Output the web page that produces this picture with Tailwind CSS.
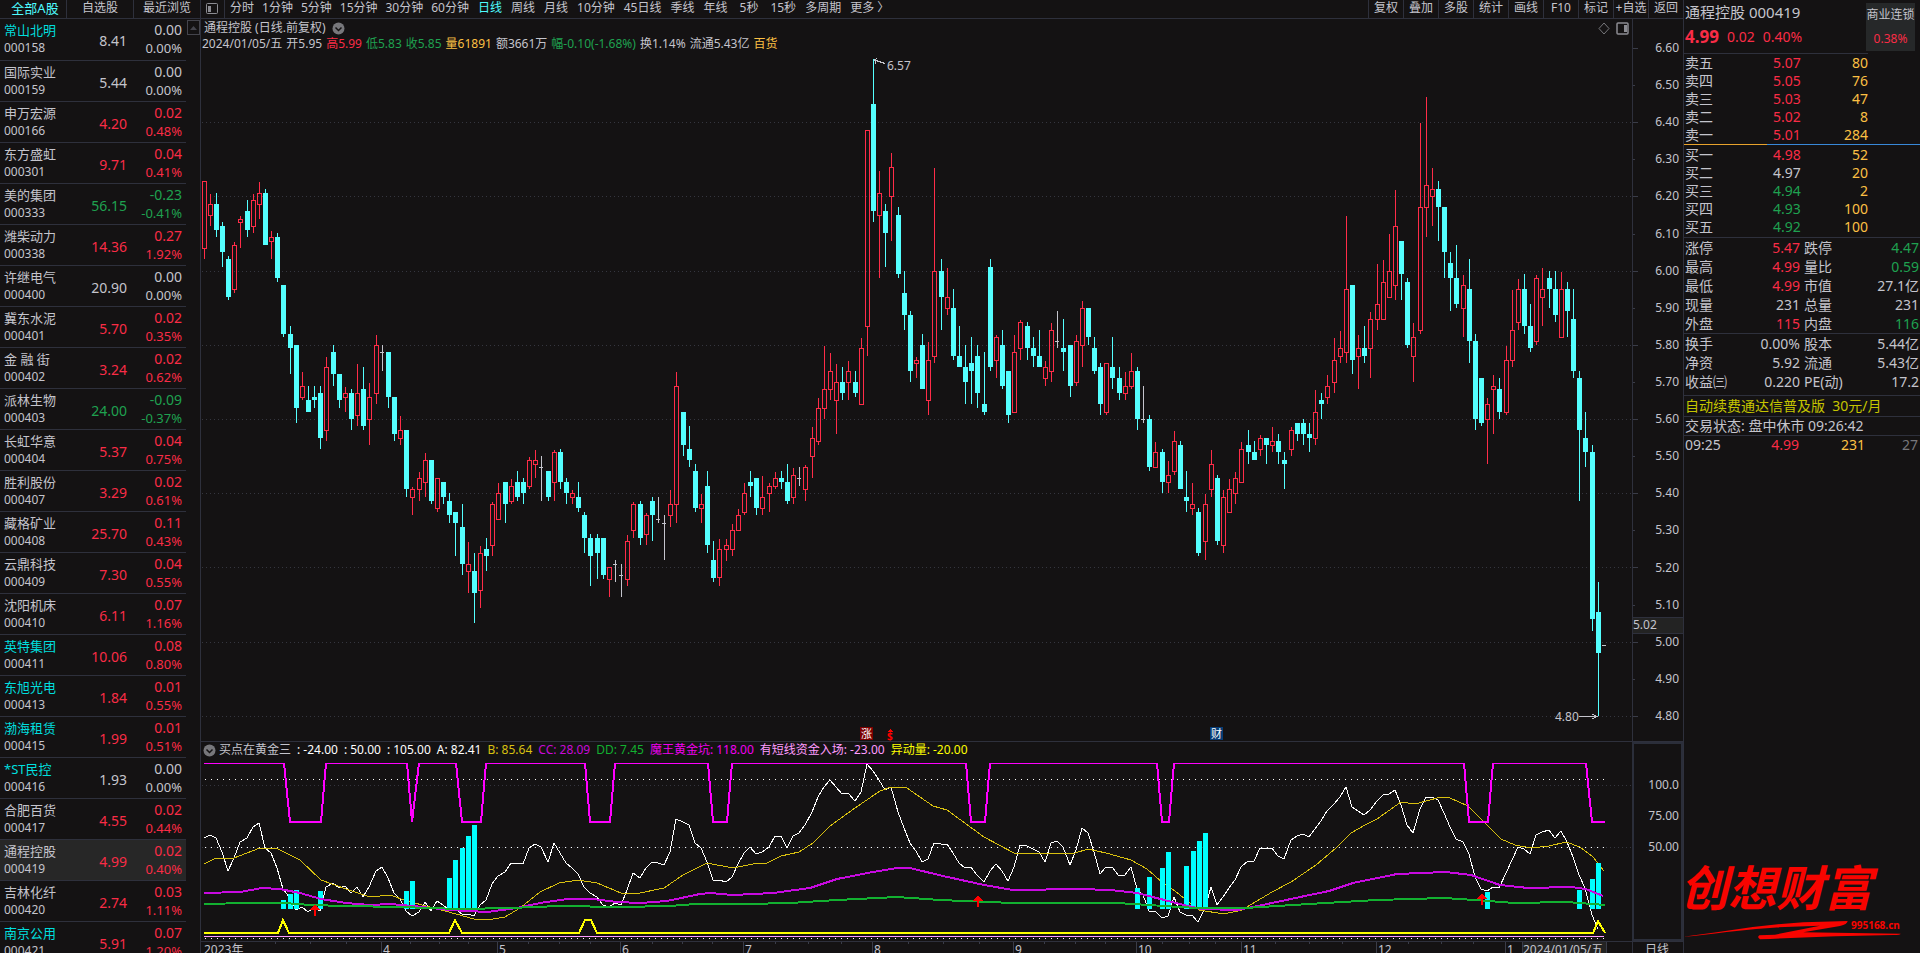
<!DOCTYPE html>
<html lang="zh-CN">
<head>
    <meta charset="UTF-8">
    <meta name="viewport" content="width=device-width, initial-scale=1.0">
    <title>通程控股 000419</title>
    <script src="https://cdn.jsdelivr.net/npm/@tailwindcss/browser@4"></script>
</head>
<body class="bg-[#141213] text-[#c4c4cc] font-['Noto_Sans','Noto_Sans_CJK_SC',sans-serif] text-[12px] leading-[16px]">
<div class="flex h-screen overflow-hidden">

    <!-- Stock list -->
    <aside class="w-[201px] shrink-0 border-r border-[#2e303c] overflow-hidden">
        <nav class="flex h-[19px] border-b border-[#2e303c]">
            <button class="w-[67px] h-[18px] pl-1 pb-[2px] border-r border-[#2e303c] text-[13px] text-[#4ffbff]">全部A股</button>
            <button class="w-[67px] h-[18px] pb-[2px] border-r border-[#2e303c]">自选股</button>
            <button class="flex-1 h-[18px] pb-[2px]">最近浏览</button>
        </nav>
        <div class="flex">
            <table class="w-[186px] table-fixed border-collapse">
                <tbody id="stocks"></tbody>
            </table>
            <button aria-label="向上滚动" class="ml-px mt-px w-[13px] h-[15px] border border-[#44444c] flex items-center justify-center">
                <svg width="7" height="4"><path d="M0 4L3.500 0L7 4Z" fill="#44444c"/></svg>
            </button>
        </div>
    </aside>

    <!-- Charts -->
    <main class="flex-1 min-w-0 flex flex-col">
        <div class="flex h-[19px] shrink-0 border-b border-[#2e303c] whitespace-nowrap">
            <button aria-label="侧栏" class="w-6 h-[18px] border-r border-[#2e303c] pl-1">
                <svg width="13" height="12" fill="none" stroke="#8c8c92"><rect x="1.500" y=".5" width="11" height="10" rx="1"/><rect x="3" y="3" width="3" height="6" fill="#8c8c92" stroke="none"/></svg>
            </button>
            <div class="flex gap-2 pl-[5px] pb-[2px]">
                <button>分时</button><button>1分钟</button><button>5分钟</button><button>15分钟</button><button>30分钟</button><button>60分钟</button>
            </div>
            <div class="flex gap-[9px] pl-[9px] pb-[2px]">
                <button class="text-[#4ffbff]">日线</button><button>周线</button><button>月线</button><button>10分钟</button><button>45日线</button><button>季线</button><button>年线</button><button class="px-[3px]">5秒</button><button>15秒</button><button>多周期</button><button>更多 〉</button>
            </div>
            <div class="ml-auto flex" id="tools"></div>
        </div>

        <div class="flex h-[723px] shrink-0 border-b border-[#2e303c]">
            <section class="relative flex-1 overflow-hidden">
                <svg class="absolute inset-0 w-full h-full" shape-rendering="crispEdges">
                    <g transform="translate(-201 -19)" id="kline"></g>
                </svg>
                <div class="relative flex items-center pl-[3px] pt-px gap-[6px]">
                    <h1>通程控股 (日线.前复权)</h1>
                    <svg width="13" height="13"><circle cx="6.500" cy="6.500" r="6" fill="#77777b"/><path d="M3.500 5.500L6.500 8.500L9.500 5.500" fill="none" stroke="#141213" stroke-width="1.500"/></svg>
                    <div class="ml-auto flex gap-[6px] pr-[3px]">
                        <svg width="12" height="13" fill="none" stroke="#77777b"><path d="M6 1L11 6.500L6 12L1 6.500Z"/></svg>
                        <svg width="13" height="13" fill="none" stroke="#8c8c92"><rect x="1" y="1" width="11" height="11" rx="1" stroke-width="1.500"/><rect x="8" y="3" width="3" height="7" fill="#8c8c92" stroke="none"/></svg>
                    </div>
                </div>
                <p class="relative flex pl-px gap-1 whitespace-nowrap">
                    <span>2024/01/05/五</span><span>开5.95</span><span class="text-[#f92c46]">高5.99</span><span class="text-[#1fa150]">低5.83</span><span class="text-[#1fa150]">收5.85</span><span class="text-[#fcc044]">量61891</span><span>额3661万</span><span class="text-[#1fa150]">幅-0.10(-1.68%)</span><span>换1.14%</span><span>流通5.43亿</span><span class="text-[#fcc044]">百货</span>
                </p>
            </section>
            <div class="relative w-[51px] border-l border-[#2e303c]">
                <svg class="absolute inset-0 w-full h-full" shape-rendering="crispEdges"><g transform="translate(0 -19)" id="ticks"></g></svg>
                <div id="prices" class="relative h-[705px] pt-[21px] pr-1 flex flex-col justify-between text-right"></div>
                <div class="absolute top-[598px] inset-x-0 h-[17px] border-y border-[#2e303c] bg-[#232323] leading-[14px]">5.02</div>
            </div>
        </div>

        <div class="flex h-[199px] shrink-0">
            <section class="relative flex-1 overflow-hidden">
                <svg class="absolute inset-0 w-full h-full" shape-rendering="crispEdges">
                    <g transform="translate(-201 -742)" id="indicator" fill="none"></g>
                </svg>
                <p class="relative flex items-center pl-[2px] gap-[6px] whitespace-nowrap text-white">
                    <span class="flex items-center gap-[3px] text-[#c4c4cc]"><svg width="13" height="13"><circle cx="6.500" cy="6.500" r="6" fill="#77777b"/><path d="M3.500 5.500L6.500 8.500L9.500 5.500" fill="none" stroke="#141213" stroke-width="1.500"/></svg>买点在黄金三</span>
                    <span>: -24.00</span><span>: 50.00</span><span>: 105.00</span><span>A: 82.41</span><span class="text-[#d8c010]">B: 85.64</span><span class="text-[#c80ad8]">CC: 28.09</span><span class="text-[#12b030]">DD: 7.45</span><span class="text-[#f000f0]">魔王黄金坑: 118.00</span><span class="text-[#ff9cff]">有短线资金入场: -23.00</span><span class="text-[#ffff00]">异动量: -20.00</span>
                </p>
            </section>
            <div class="w-[51px] border-2 border-[#2b2e3a] pt-[33px] pr-[2px] flex flex-col gap-[15px] text-right">
                <span>100.0</span><span>75.00</span><span>50.00</span>
            </div>
        </div>

        <div class="flex h-[18px] shrink-0 border-t border-[#2e303c]">
            <div class="relative flex-1 overflow-hidden">
                <svg class="absolute inset-0 w-full h-full" fill="#c4c4cc" font-size="12"><g transform="translate(-201 -942)" id="months"></g></svg>
            </div>
            <div class="w-[51px] border-l border-[#2e303c] pl-3">日线</div>
        </div>
    </main>

    <!-- Quote panel -->
    <aside class="w-[237px] shrink-0 border-l border-[#2e303c] flex flex-col text-[14px]">
        <div class="flex h-[53px] shrink-0 pl-px pr-[5px] justify-between">
            <div>
                <h2 class="text-[15px] leading-[24px]">通程控股 000419</h2>
                <p class="flex items-center gap-2 leading-[26px] text-[#f92c46]"><b class="text-[17px]">4.99</b><span>0.02</span><span>0.40%</span></p>
            </div>
            <a href="#" class="mt-[3px] w-[49px] h-[48px] bg-[#262829] text-[12px] leading-[24px] text-center whitespace-nowrap">商业连锁<br><span class="text-[#f92c46]">0.38%</span></a>
        </div>
        <table class="w-[184px] table-fixed leading-[18px] border-t border-[#2e303c]"><tbody id="asks"></tbody></table>
        <div class="flex h-px mb-px shrink-0"><div class="w-[83px] bg-[#e8a22c]"></div><div class="flex-1 bg-[#3888d8]"></div></div>
        <table class="w-[184px] table-fixed leading-[18px]"><tbody id="bids"></tbody></table>
        <table class="w-full table-fixed leading-[19px] border-t border-[#2e303c] mt-px"><tbody id="stats"></tbody></table>
        <table class="w-full table-fixed leading-[19px] border-t border-[#2e303c]"><tbody id="basics"></tbody></table>
        <p class="h-[21px] mt-1 shrink-0 pl-px border-t border-[#2e303c] leading-[19px] text-[#c4c400] whitespace-pre">自动续费通达信普及版  30元/月</p>
        <p class="h-[19px] shrink-0 pl-px border-t border-[#2e303c] leading-[17px]">交易状态: 盘中休市 09:26:42</p>
        <div class="flex shrink-0 border-t border-[#2e303c] pl-px pr-[2px] leading-[18px]">
            <span class="w-[50px]">09:25</span><span class="w-[64px] text-right text-[#f92c46]">4.99</span><span class="w-[66px] text-right text-[#fcc044]">231</span><span class="flex-1 text-right text-[#77777b]">27</span>
        </div>
        <svg class="mt-auto shrink-0 w-full h-[113px] overflow-visible" fill="#f80400">
            <text x="-4" y="66" font-size="48" font-weight="700" font-style="italic" font-family="Noto Sans CJK SC">创想财富</text>
            <path transform="translate(-24 0) scale(.3333)" d="M70 290L170 277Q300 255 430 247L563 243Q562 253 540 258L430 277L722 281Q722 285 700 285Q500 288 300 298Q290 292 298 286L345 284L480 257Q330 260 200 276Q130 286 70 290Z"/>
            <text x="167" y="89" font-size="10" font-weight="700">995168.cn</text>
        </svg>
    </aside>
</div>

<script>
    const $ = id => document.getElementById(id);
    const tone = { r: 'text-[#f92c46]', g: 'text-[#1fa150]', w: '', y: 'text-[#fcc044]', c: 'text-[#00dede]' };

    // name, code, price, change, percent; names starting with "~" are cyan
    const stocks = `~常山北明,000158,8.41,0.00,0.00%
国际实业,000159,5.44,0.00,0.00%
申万宏源,000166,4.20,0.02,0.48%
东方盛虹,000301,9.71,0.04,0.41%
美的集团,000333,56.15,-0.23,-0.41%
潍柴动力,000338,14.36,0.27,1.92%
许继电气,000400,20.90,0.00,0.00%
冀东水泥,000401,5.70,0.02,0.35%
金 融 街,000402,3.24,0.02,0.62%
派林生物,000403,24.00,-0.09,-0.37%
长虹华意,000404,5.37,0.04,0.75%
胜利股份,000407,3.29,0.02,0.61%
藏格矿业,000408,25.70,0.11,0.43%
云鼎科技,000409,7.30,0.04,0.55%
沈阳机床,000410,6.11,0.07,1.16%
~英特集团,000411,10.06,0.08,0.80%
~东旭光电,000413,1.84,0.01,0.55%
~渤海租赁,000415,1.99,0.01,0.51%
~*ST民控,000416,1.93,0.00,0.00%
合肥百货,000417,4.55,0.02,0.44%
通程控股,000419,4.99,0.02,0.40%
吉林化纤,000420,2.74,0.03,1.11%
~南京公用,000421,5.91,0.07,1.20%`;
    $('stocks').innerHTML = stocks.split('\n').map(line => {
        const [name, code, price, chg, pct] = line.split(',');
        const cls = chg === '0.00' ? tone.w : chg[0] === '-' ? tone.g : tone.r;
        return `<tr class="h-[41px] border-b border-[#2e303c] leading-[18px] ${code === '000419' ? 'bg-[#272727]' : ''}">
            <td class="w-[72px] pl-1 whitespace-nowrap"><div class="text-[13px] ${name[0] === '~' ? tone.c : ''}">${name.replace('~', '')}</div><div>${code}</div></td>
            <td class="w-[55px] pt-1 text-right text-[14px] ${cls}">${price}</td>
            <td class="pr-1 text-right ${cls}"><div class="text-[14px]">${chg}</div><div class="text-[13px]">${pct}</div></td></tr>`;
    }).join('');

    $('tools').innerHTML = ['复权', '叠加', '多股', '统计', '画线', 'F10', '标记', '+自选', '返回'].map(t =>
        `<button class="w-[35px] h-[18px] pb-[2px] border-l border-[#2e303c]">${t}</button>`).join('');

    const book = rows => rows.map(([n, p, q, c]) =>
        `<tr><td class="pl-px">${n}</td><td class="text-right pr-[6px] ${tone[c]}">${p}</td><td class="text-right text-[#fcc044]">${q}</td></tr>`).join('');
    $('asks').innerHTML = book([['卖五', '5.07', 80, 'r'], ['卖四', '5.05', 76, 'r'], ['卖三', '5.03', 47, 'r'], ['卖二', '5.02', 8, 'r'], ['卖一', '5.01', 284, 'r']]);
    $('bids').innerHTML = book([['买一', '4.98', 52, 'r'], ['买二', '4.97', 20, 'w'], ['买三', '4.94', 2, 'g'], ['买四', '4.93', 100, 'g'], ['买五', '4.92', 100, 'g']]);

    const pairs = rows => rows.map(([a, b, c, d, e, f]) =>
        `<tr><td class="w-[52px] pl-px whitespace-nowrap">${a}</td><td class="w-[64px] text-right ${tone[c]}">${b}</td><td class="w-[60px] pl-1">${d}</td><td class="text-right pr-px ${tone[f]}">${e}</td></tr>`).join('');
    $('stats').innerHTML = pairs([['涨停', '5.47', 'r', '跌停', '4.47', 'g'], ['最高', '4.99', 'r', '量比', '0.59', 'g'], ['最低', '4.99', 'r', '市值', '27.1亿', 'w'], ['现量', '231', 'w', '总量', '231', 'w'], ['外盘', '115', 'r', '内盘', '116', 'g']]);
    $('basics').innerHTML = pairs([['换手', '0.00%', 'w', '股本', '5.44亿', 'w'], ['净资', '5.92', 'w', '流通', '5.43亿', 'w'], ['收益㈢', '0.220', 'w', 'PE(动)', '17.2', 'w']]);

    // Price scale
    let labels = '', ticks = '';
    for (let i = 0; i < 19; i++) {
        labels += `<span>${(6.6 - i / 10).toFixed(2)}</span>`;
        ticks += `<rect x="0" y="${Math.round(48 + i * 37.1)}" width="${i % 2 ? 2 : 5}" height="1" fill="#3a3c48"/>`;
    }
    $('prices').innerHTML = labels;
    $('ticks').innerHTML = ticks;

    // Candles: kind (r rise, c fall, w flat), high, body top, body bottom, low
    const candles = `r181,181,249,259 r194,204,216,226 c193,204,230,237 c222,226,252,267 c256,259,297,300 r242,245,290,293 r216,219,223,248 c200,211,230,237 r194,200,227,233 r182,193,205,219
c189,193,245,245 r231,237,242,259 c233,237,278,282 c285,285,334,337 c326,334,348,374 c345,345,408,423 r372,386,398,400 c386,400,412,412 c386,397,400,408 c386,393,438,449
r357,367,431,441 c345,352,374,386 c374,374,400,408 r387,393,398,412 c389,393,419,430 r364,393,416,426 c367,389,426,430 r383,397,420,445 r335,345,394,404 w345,352,353,371
c352,352,397,408 c397,397,434,441 r416,430,439,445 c430,430,489,497 r487,489,498,515 r472,478,490,501 r453,460,483,497 c460,460,501,504 r478,478,509,512 c482,482,497,504
c493,501,515,523 c512,512,523,556 c504,527,564,575 r542,564,572,593 c553,571,593,623 r546,553,591,608 c538,549,556,571 r502,504,546,556 r483,493,520,520 c482,482,504,523
r479,486,502,504 c471,482,497,501 c478,482,493,504 r457,460,487,489 r450,460,465,478 w456,467,468,501 c471,471,497,501 r450,452,483,501 c449,452,482,489 c478,482,493,504
r490,493,498,504 c482,497,508,512 c512,515,538,553 c534,538,556,586 c534,538,553,579 c538,538,575,579 r567,567,580,597 w560,564,565,582 w564,575,576,597 r535,541,580,586
r502,504,531,538 c501,504,538,545 r513,515,535,545 c497,501,515,541 w497,519,520,523 w515,523,524,560 r490,504,516,527 r372,386,505,523 c412,412,445,456 c426,449,460,467
c464,471,508,512 r494,504,509,523 c471,486,545,553 c541,560,578,582 r539,549,578,586 r539,545,550,561 r524,530,550,556 r509,515,531,531 r483,493,513,515 c471,482,486,497
c478,478,508,515 r476,497,509,515 r483,486,494,512 r472,478,487,489 c471,478,482,489 c464,482,501,504 r468,475,498,504 w467,478,479,486 r465,467,490,501 r427,438,457,478
r398,408,442,445 r346,389,409,419 r353,371,390,400 r364,382,401,434 c367,382,393,400 r361,371,383,400 c371,382,393,397 r338,348,405,405 r130,130,327,356 c59,104,211,222
r171,193,216,278 c204,211,233,267 r153,167,197,241 c207,215,274,278 c271,293,315,330 c311,315,371,382 r357,360,364,378 c334,345,389,389 r342,360,401,415 r168,271,357,363
c259,271,297,330 r268,297,309,315 c289,308,356,360 c326,356,367,367 c345,367,382,404 c337,363,371,404 c345,356,393,408 c352,404,412,415 c259,267,367,371 r335,337,361,378
c330,345,386,389 c371,371,415,423 r335,352,413,413 r320,322,349,360 c322,326,348,360 c337,348,356,367 c330,356,367,367 r361,367,379,386 r323,330,372,382 w311,341,342,348
c319,348,352,371 c345,345,386,397 r335,341,383,386 r301,308,346,367 c308,308,337,345 c337,348,371,374 c363,367,404,415 r363,363,413,415 c337,367,378,389 c367,378,393,400
r372,386,394,400 r353,371,387,389 c367,371,419,430 w386,419,420,423 c415,419,467,471 r442,452,468,468 c449,452,482,493 r461,475,483,493 r431,441,472,475 c441,445,489,489
c471,497,501,512 r483,504,509,515 c508,512,553,556 r494,504,542,560 r450,464,490,497 c475,478,541,545 r490,497,546,553 r479,489,513,513 r472,478,494,504 r442,449,483,483
c430,445,452,464 c441,452,460,460 r435,438,450,456 c438,438,445,464 r427,441,446,452 c434,441,452,464 c452,460,464,489 r427,430,450,456 c423,423,434,441 c419,423,434,445
c423,434,438,452 r390,412,439,445 c393,400,404,419 r375,386,398,404 r338,360,383,393 r331,348,357,363 r216,289,353,363 c285,285,360,374 r335,348,357,389 c326,348,356,363
r312,319,349,378 r264,304,320,330 r260,282,320,320 r234,271,298,298 r190,226,286,300 c241,241,274,300 c278,282,345,348 r323,337,357,382 r123,207,331,334 r97,185,208,237
r168,189,197,226 c181,189,207,241 c207,207,252,278 c252,263,278,311 c245,278,304,308 r275,285,309,337 c259,289,341,363 c334,341,419,430 c378,378,423,426 r398,404,420,464
r375,386,390,434 c378,389,412,419 r346,360,413,415 r290,330,361,367 r279,289,323,330 c274,289,326,334 c304,326,348,352 r275,278,342,345 r268,289,298,326 c271,278,289,308
c271,289,315,322 r272,289,338,338 c282,289,311,337 c289,319,371,378 c371,378,430,501 c412,438,452,467 c445,452,619,631 c582,612,653,716`.split(/\s+/);
    const barX = i => 204 + Math.floor(i * 6.1412 + 0.1);

    let k = '';
    for (const y of [122, 196, 271, 345, 419, 493, 567, 642, 716])
        k += `<line x1="202" x2="1632" y1="${y + .5}" y2="${y + .5}" stroke="#35363f" stroke-dasharray="1 3"/>`;
    candles.forEach((c, i) => {
        const [h, t, b, l] = c.slice(1).split(',').map(Number), x = barX(i);
        if (c[0] === 'r') k += `<path d="M${x} ${h}h1v${t - h}h-1zM${x} ${b}h1v${l - b}h-1z" fill="#ff2c48"/><rect x="${x - 1.5}" y="${t + .5}" width="4" height="${b - t - 1}" fill="none" stroke="#ff2c48"/>`;
        else if (c[0] === 'c') k += `<path d="M${x} ${h}h1v${l - h}h-1zM${x - 2} ${t}h5v${b - t}h-5z" fill="#54ffff"/>`;
        else k += `<path d="M${x} ${h}h1v${l - h}h-1zM${x - 2} ${t}h4v1h-4z" fill="#c4c4cc"/>`;
    });
    // High / low marks and event badges
    k += `<path d="M1602 645h4v1h-4z" fill="#c4c4cc"/>
        <path d="M885 63.500L874.500 60L877 58.500M874.500 60L876 63.500M1579 716.500H1597M1592 714L1597 716.500L1592 719" fill="none" stroke="#c4c4cc"/>
        <text x="887" y="70" font-size="12" fill="#c4c4cc">6.57</text><text x="1555" y="721" font-size="12" fill="#c4c4cc">4.80</text>
        <rect x="860" y="727" width="13" height="13" fill="#7c0000"/><text x="861" y="738" font-size="11" fill="#fff">涨</text>
        <path d="M890 729l-3 3h6z" fill="#f00"/><text x="887" y="740" font-size="10" font-weight="700" fill="#f00">$</text>
        <rect x="1210" y="727" width="13" height="13" fill="#083c74"/><text x="1211" y="738" font-size="11" fill="#fff">财</text>`;
    $('kline').innerHTML = k;

    // Indicator
    const lineA = [838,835,838,852,871,858,842,838,827,823,848,853,868,889,898,910,907,912,907,911,887,883,888,886,893,887,897,887,871,867,878,893,899,911,916,912,902,911,901,905,910,909,914,914,916,905,900,884,876,872,863,863,864,848,844,847,862,843,853,863,868,874,887,893,897,905,907,903,905,890,873,878,868,862,863,865,852,819,822,825,843,848,862,880,880,882,877,864,853,847,854,852,847,836,836,848,836,833,825,812,797,787,780,787,794,793,801,792,764,771,780,790,787,812,828,843,851,862,859,843,844,844,853,863,868,867,875,882,871,864,871,881,867,845,846,849,852,862,843,841,847,865,850,828,833,852,874,867,867,876,875,867,889,895,911,911,918,916,897,912,915,915,922,908,887,905,897,888,880,867,861,861,848,849,848,856,859,840,836,834,837,829,821,811,804,797,787,807,811,815,810,801,795,794,790,805,825,833,809,797,797,800,813,827,839,842,854,877,889,891,887,888,873,860,847,849,854,835,832,830,838,831,842,857,875,888,915,929];
    const lineB = '204,864 216,858 234,858 260,848 278,849 300,860 321,880 346,889 370,897 390,895 407,901 430,907 456,914 474,919 487,920 505,917 520,908 540,892 559,883 578,880 597,883 621,893 640,893 664,888 683,875 707,863 733,868 753,864 767,863 781,856 799,852 813,843 830,826 855,808 880,791 891,787 907,788 933,806 947,810 984,837 1014,853 1075,853 1088,849 1106,853 1131,860 1147,869 1163,883 1175,891 1199,910 1224,914 1242,910 1272,892 1291,882 1316,865 1336,848 1351,833 1365,825 1377,819 1401,802 1415,804 1441,797 1450,798 1468,806 1487,825 1501,839 1515,845 1531,848 1549,846 1566,842 1580,847 1593,857 1604,871';
    const lineC = '204,893 240,892 262,888 280,889 300,893 321,899 346,903 370,905 390,904 413,906 450,910 487,912 517,908 540,903 567,899 593,899 617,902 640,903 667,901 700,894 710,893 733,895 773,893 810,888 837,879 873,872 897,868 910,868 943,876 984,885 1013,890 1080,889 1110,890 1137,893 1180,904 1201,909 1238,910 1272,903 1305,896 1329,891 1353,883 1397,874 1446,872 1471,875 1500,885 1528,888 1571,887 1586,889 1603,896';
    const lineD = '204,904 248,903 285,903 310,905 345,906 400,907 430,908 460,909 510,908 560,906 620,907 670,906 695,904 747,904 790,903 837,900 897,897 940,900 1013,903 1117,903 1180,907 1197,908 1245,908 1309,904 1377,900 1444,898 1474,900 1515,903 1566,902 1605,905';
    const pits = [[284,290,321,326],[407,412,412,419],[456,462,481,486],[585,590,610,615],[708,713,727,732],[966,971,985,990],[1157,1162,1169,1174],[1464,1469,1488,1493]];
    const bars = [[283,900],[290,894],[296,890],[320,891],[406,891],[412,881],[449,878],[455,860],[462,848],[468,836],[474,825],[1137,888],[1149,877],[1162,868],[1168,852],[1186,866],[1193,851],[1199,841],[1205,833],[1487,892],[1579,890],[1592,879],[1598,863]];

    let s = '';
    for (const y of [785, 847]) s += `<line x1="202" x2="1632" y1="${y + .5}" y2="${y + .5}" stroke="#35363f" stroke-dasharray="1 3"/>`;
    for (const y of [779, 847, 938]) s += `<line x1="205" x2="1606" y1="${y + .5}" y2="${y + .5}" stroke="#fff" stroke-dasharray="1 5"/>`;
    s += `<polyline points="${lineA.map((y, i) => barX(i) + ',' + y).join(' ')}" stroke="#fff"/><polyline points="${lineB}" stroke="#d8c010"/>`;
    bars.forEach(([x, y]) => s += `<rect x="${x - 2}" y="${y}" width="5" height="${909 - y}" fill="#0ff"/>`);
    s += `<polyline points="${lineC}" stroke="#c80ae0" stroke-width="2"/><polyline points="${lineD}" stroke="#12b030" stroke-width="2"/>`;
    let from = 204;
    pits.concat([[1586, 1592, 1605]]).forEach(([a, b, c, d]) => {
        s += `<path d="M${from} 763.500H${a}" stroke="#f0f"/><path d="M${a} 763L${b} 822H${c}${d ? `L${d} 763` : ''}" stroke="#f0f" stroke-width="2"/>`;
        from = d;
    });
    s += `<path d="M204 933H278L283 920L289 933H449L455 920L462 933H579L585 920H591L597 933H1593L1598 921L1605 933" stroke="#ff0" stroke-width="2"/>
        <path d="M204 936.500H1604" stroke="#ff9cff"/>`;
    [[315, 904], [978, 895], [1482, 893]].forEach(([x, y]) => s += `<path d="M${x} ${y}l5 6h-4v6h-2v-6h-4z" fill="#f00"/>`);
    $('indicator').innerHTML = s;

    // Time axis
    let m = '<text x="204" y="954">2023年</text>';
    [[381, 4], [497, 5], [620, 6], [743, 7], [872, 8], [1013, 9], [1136, 10], [1241, 11], [1376, 12], [1505, 1]].forEach(([x, t]) =>
        m += `<rect x="${x}" y="942" width="1" height="12" fill="#3a3c48"/><text x="${x + 2}" y="954">${t}</text>`);
    [275, 310, 346, 410, 439, 468, 528, 559, 590, 652, 682, 712, 775, 808, 841, 908, 943, 979, 1044, 1075, 1105, 1162, 1189, 1215, 1275, 1309, 1342, 1408, 1441, 1473].forEach(x =>
        m += `<rect x="${x}" y="942" width="1" height="2" fill="#3a3c48"/>`);
    m += '<rect x="1522.500" y="941.500" width="84" height="16" fill="#232323" stroke="#3a3c48"/><text x="1523" y="954">2024/01/05/五</text>';
    $('months').innerHTML = m;
</script>
</body>
</html>
